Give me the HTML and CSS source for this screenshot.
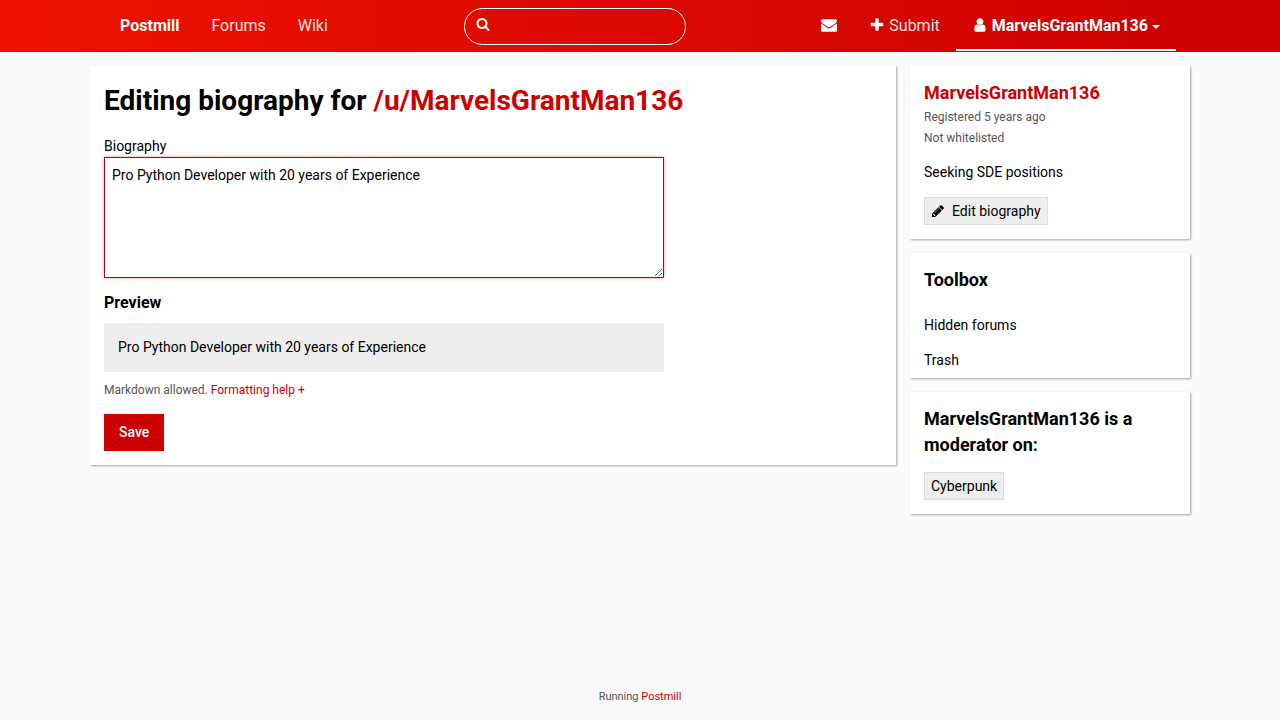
FILE: index.html
```html
<!DOCTYPE html>
<html lang="en">
<head>
<meta charset="utf-8">
<meta name="viewport" content="width=device-width, initial-scale=1">
<title>Editing biography</title>
<link rel="stylesheet" href="styles.css">
</head>
<body>
<header class="site-header">
  <div class="site-nav">
    <nav class="nav-group">
      <a class="nav-link strong" href="#">Postmill</a>
      <a class="nav-link" href="#">Forums</a>
      <a class="nav-link" href="#">Wiki</a>
    </nav>
    <form class="search">
      <svg class="search-icon" viewBox="0 0 1792 1792" aria-hidden="true"><path d="M1216 832q0-185-131.500-316.500t-316.500-131.500-316.500 131.500-131.500 316.500 131.500 316.500 316.500 131.500 316.500-131.500 131.500-316.500zm512 832q0 52-38 90t-90 38q-54 0-90-38l-343-342q-179 124-399 124-143 0-273.500-55.500t-225-150-150-225-55.500-273.500 55.500-273.500 150-225 225-150 273.500-55.500 273.500 55.500 225 150 150 225 55.500 273.500q0 220-124 399l343 343q37 37 37 90z"/></svg>
      <input class="search-input" type="search" aria-label="Search">
    </form>
    <nav class="nav-group" aria-label="Account">
      <a class="nav-link" href="#" aria-label="Messages">
        <svg class="icon" viewBox="0 0 1792 1792" aria-hidden="true"><path d="M1792 710v794q0 66-47 113t-113 47h-1472q-66 0-113-47t-47-113v-794q44 49 101 87 362 246 497 345 57 42 92.500 65.500t94.500 48 110 24.500h2q51 0 110-24.500t94.500-48 92.500-65.500q170-123 498-345 57-39 100-87zm0-294q0 79-49 151t-122 123q-376 261-468 325-10 7-42.500 31t-54 38.500-52 32.500-57.500 27-50 9h-2q-23 0-50-9t-57.500-27-52-32.500-54-38.500-42.500-31q-91-64-262-182.500t-205-142.500q-62-42-117-115.500t-55-136.500q0-78 41.500-130t118.500-52h1472q65 0 112.500 47t47.500 113z"/></svg>
      </a>
      <a class="nav-link" href="#">
        <svg class="icon" viewBox="0 0 1792 1792" aria-hidden="true"><path d="M1600 736v192q0 40-28 68t-68 28h-416v416q0 40-28 68t-68 28h-192q-40 0-68-28t-28-68v-416h-416q-40 0-68-28t-28-68v-192q0-40 28-68t68-28h416v-416q0-40 28-68t68-28h192q40 0 68 28t28 68v416h416q40 0 68 28t28 68z"/></svg>
        Submit
      </a>
      <button class="nav-link strong account" type="button">
        <svg class="icon" viewBox="0 0 1792 1792" aria-hidden="true"><path d="M1536 1399q0 109-62.500 187t-150.500 78h-854q-88 0-150.500-78t-62.500-187q0-85 8.500-160.500t31.500-152 58.500-131 94-89 134.500-34.500q131 128 313 128t313-128q76 0 134.500 34.500t94 89 58.500 131 31.500 152 8.500 160.500zm-256-887q0 159-112.500 271.500t-271.500 112.500-271.500-112.500-112.500-271.500 112.500-271.500 271.500-112.500 271.500 112.500 112.500 271.500z"/></svg>
        MarvelsGrantMan136
        <svg class="caret" viewBox="0 0 8 4" aria-hidden="true"><path d="M0 0h8L4 4z"/></svg>
      </button>
    </nav>
  </div>
</header>

<div class="columns">
  <main class="card content">
    <h1 class="page-title">Editing biography for <a href="#">/u/MarvelsGrantMan136</a></h1>
    <form class="bio-form">
      <label class="bio-label" for="bio">Biography</label>
      <textarea class="bio-input" id="bio">Pro Python Developer with 20 years of Experience</textarea>
      <h3 class="preview-title">Preview</h3>
      <div class="preview">Pro Python Developer with 20 years of Experience</div>
      <p class="help">Markdown allowed. <a href="#">Formatting help +</a></p>
      <button class="save" type="submit">Save</button>
    </form>
  </main>

  <aside class="sidebar">
    <section class="card">
      <h2 class="card-title"><a href="#">MarvelsGrantMan136</a></h2>
      <p class="meta">Registered 5 years ago</p>
      <p class="meta">Not whitelisted</p>
      <p class="bio">Seeking SDE positions</p>
      <a class="tag" href="#">
        <svg class="tag-icon" viewBox="0 0 1792 1792" aria-hidden="true"><path d="M491 1536l91-91-235-235-91 91v107h128v128h107zm523-928q0-22-22-22-10 0-17 7l-542 542q-7 7-7 17 0 22 22 22 10 0 17-7l542-542q7-7 7-17zm-54-192l416 416-832 832h-416v-416zm683 96q0 53-37 90l-166 166-416-416 166-165q36-38 90-38 53 0 91 38l235 234q37 39 37 91z"/></svg>
        Edit biography
      </a>
    </section>
    <section class="card toolbox">
      <h2 class="card-title">Toolbox</h2>
      <ul class="menu">
        <li><a class="menu-link" href="#">Hidden forums</a></li>
        <li><a class="menu-link" href="#">Trash</a></li>
      </ul>
    </section>
    <section class="card">
      <h2 class="card-title spaced">MarvelsGrantMan136 is a moderator on:</h2>
      <a class="tag" href="#">Cyberpunk</a>
    </section>
  </aside>
</div>

<footer class="site-footer">Running <a href="#">Postmill</a></footer>
</body>
</html>
```
FILE: styles.css
```css
* {
  box-sizing: border-box;
}

body {
  display: flex;
  flex-direction: column;
  min-height: 100vh;
  margin: 0;
  background: #fafafa;
  color: #000;
  font: 14px/21px Roboto, sans-serif;
}

h1, h2, h3, p, ul {
  margin: 0;
  padding: 0;
}

a {
  color: #c00;
  text-decoration: none;
}

button, input, textarea {
  font: inherit;
}

svg {
  flex: none;
  fill: currentColor;
}

.site-header {
  background: linear-gradient(to right, #e10, #c00);
}

.site-nav {
  display: flex;
  justify-content: space-between;
  max-width: 1100px;
  margin: 0 auto;
  padding: 0 14px 1px;
}

.nav-group {
  display: flex;
}

.nav-link {
  display: flex;
  align-items: center;
  gap: 4px;
  height: 51px;
  padding: 0 16px;
  border: 0;
  background: none;
  color: rgba(255, 255, 255, 0.9);
  font-size: 16px;
}

.strong {
  color: #fff;
  font-weight: 700;
}

.account {
  box-shadow: inset 0 -2px #fff;
}

.icon {
  width: 16px;
  height: 16px;
  margin-bottom: 2px;
  color: #fff;
}

.caret {
  width: 8px;
  height: 4px;
  margin-top: 2px;
}

.search {
  display: flex;
  align-items: center;
  align-self: flex-start;
  gap: 7px;
  width: 222px;
  height: 37px;
  margin-top: 8px;
  padding: 0 11px;
  border: 1px solid #fff;
  border-radius: 19px;
  color: #fff;
}

.search-icon {
  width: 14px;
  height: 14px;
  margin-bottom: 5px;
}

.search-input {
  flex: 1;
  min-width: 0;
  padding: 0;
  border: 0;
  outline: 0;
  background: none;
  color: inherit;
}

.columns {
  display: grid;
  grid-template-columns: 1fr 280px;
  align-items: start;
  gap: 14px;
  width: 100%;
  max-width: 1100px;
  margin: 14px auto;
}

.sidebar {
  display: grid;
  gap: 14px;
}

.card {
  padding: 14px;
  background: #fff;
  box-shadow: 1px 1px 2px rgba(0, 0, 0, 0.35);
}

.page-title {
  margin-bottom: 14px;
  font-size: 28px;
  line-height: 42px;
}

.bio-form {
  max-width: 560px;
}

.bio-label {
  display: block;
}

.bio-input {
  display: block;
  width: 100%;
  height: 121px;
  padding: 7px;
  border: 1px solid #b00020;
  outline: 0;
  box-shadow: 0 0 4px rgba(255, 0, 0, 0.4);
  background: #fff;
  color: #000;
  resize: vertical;
}

.preview-title {
  margin: 14px 0 10px;
  font-size: 16px;
}

.preview {
  padding: 14px;
  background: #eee;
}

.help {
  margin: 8px 0 13px;
  color: #555;
  font-size: 12px;
}

.save {
  display: block;
  padding: 8px 15px;
  border: 0;
  background: #c00;
  color: #fff;
  font-weight: 500;
}

.card-title {
  padding-bottom: 1px;
  font-size: 18px;
  line-height: 26px;
}

.spaced {
  margin-bottom: 13px;
}

.meta {
  color: #555;
  font-size: 12px;
}

.bio {
  margin: 13px 0 14px;
}

.tag {
  display: flex;
  align-items: center;
  gap: 7px;
  width: fit-content;
  height: 28px;
  padding: 0 6px;
  border: 1px solid #ddd;
  background: #eee;
  color: #000;
}

.tag-icon {
  width: 14px;
  height: 14px;
}

.toolbox {
  padding-bottom: 0;
}

.menu {
  margin-top: 14px;
  list-style: none;
}

.menu-link {
  display: block;
  padding: 7px 0;
  color: #000;
}

.site-footer {
  margin-top: auto;
  padding: 13px;
  color: #555;
  font-size: 11px;
  text-align: center;
}
```
